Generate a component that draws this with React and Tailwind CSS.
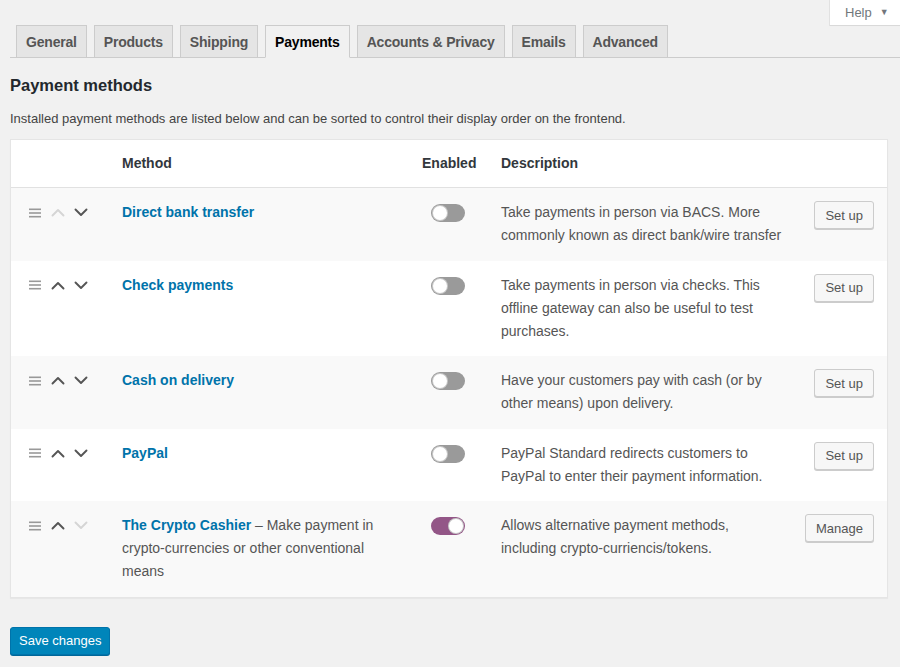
import React from "react";

const FONT = { fontFamily: '"Liberation Sans", Arial, Helvetica, sans-serif' };

function Drag() {
  return (
    <svg width="12" height="10" viewBox="0 0 12 10" className="block">
      <rect x="0" y="0.5" width="12" height="1.6" fill="#999" />
      <rect x="0" y="4.2" width="12" height="1.6" fill="#999" />
      <rect x="0" y="7.9" width="12" height="1.6" fill="#999" />
    </svg>
  );
}

function Chevron({ up, disabled }) {
  return (
    <svg width="14" height="9" viewBox="0 0 14 9" className="block">
      <path
        d={up ? "M1.5 7.5 L7 2 L12.5 7.5" : "M1.5 1.5 L7 7 L12.5 1.5"}
        fill="none"
        stroke={disabled ? "#d5d5d5" : "#555"}
        strokeWidth="1.9"
        strokeLinecap="round"
        strokeLinejoin="round"
      />
    </svg>
  );
}

function Toggle({ on }) {
  return (
    <div
      className={`w-[34px] h-[18px] rounded-full flex items-center px-[1px] ${
        on ? "bg-[#935687] justify-end" : "bg-[#9a9a9a] justify-start"
      }`}
    >
      <div className="w-[16px] h-[16px] rounded-full bg-white border border-[#777]/40" />
    </div>
  );
}

const rows = [
  {
    name: "Direct bank transfer",
    desc: "Take payments in person via BACS. More commonly known as direct bank/wire transfer",
    bg: "bg-[#f9f9f9]",
    upDisabled: true,
    btn: "Set up",
  },
  {
    name: "Check payments",
    desc: "Take payments in person via checks. This offline gateway can also be useful to test purchases.",
    bg: "bg-white",
    btn: "Set up",
  },
  {
    name: "Cash on delivery",
    desc: "Have your customers pay with cash (or by other means) upon delivery.",
    bg: "bg-[#f9f9f9]",
    btn: "Set up",
  },
  {
    name: "PayPal",
    desc: "PayPal Standard redirects customers to PayPal to enter their payment information.",
    bg: "bg-white",
    btn: "Set up",
  },
  {
    name: "The Crypto Cashier",
    extra: " – Make payment in crypto-currencies or other conventional means",
    desc: "Allows alternative payment methods, including crypto-curriencis/tokens.",
    bg: "bg-[#f9f9f9]",
    downDisabled: true,
    on: true,
    btn: "Manage",
  },
];

const tabs = ["General", "Products", "Shipping", "Payments", "Accounts & Privacy", "Emails", "Advanced"];

const grid = "grid grid-cols-[111px_290px_79px_310px_1fr]";

export default function App() {
  return (
    <div className="w-[900px] h-[667px] bg-[#f1f1f1] overflow-hidden text-[#444]" style={FONT}>
      {/* help row */}
      <div className="h-[25px] flex justify-end">
        <div className="w-[70px] h-[25px] bg-white shadow-[0_0_0_1px_rgba(0,0,0,0.06),0_1px_1px_rgba(0,0,0,0.04)] flex items-center pl-[15px] text-[13px] text-[#72777c]">
          <span>Help</span>
          <span className="ml-[8px] text-[9px] text-[#72777c]">▼</span>
        </div>
      </div>

      {/* tabs */}
      <div className="ml-[10px] border-b border-[#ccc] flex pl-[6px] gap-[7px] h-[33px] items-end">
        {tabs.map((t) => {
          const active = t === "Payments";
          return (
            <div
              key={t}
              className={`h-[33px] px-[9px] border border-[#ccc] flex items-center text-[14px] tracking-[-0.2px] font-bold leading-[20px] -mb-px ${
                active
                  ? "bg-[#f1f1f1] border-b-[#f1f1f1] text-black"
                  : "bg-[#e5e5e5] text-[#555]"
              }`}
            >
              {t}
            </div>
          );
        })}
      </div>

      <div className="px-[10px]">
        <h2 className="mt-[16px] text-[16.5px] leading-[22px] font-bold text-[#23282d]">Payment methods</h2>
        <p className="mt-[13px] text-[13px] leading-[19px] text-[#444]">
          Installed payment methods are listed below and can be sorted to control their display order on the frontend.
        </p>

        <div className="mt-[11px] w-[878px] bg-white border border-[#e5e5e5] shadow-[0_1px_1px_rgba(0,0,0,0.04)] text-[14px] leading-[23px]">
          <div className={`${grid} h-[48px] items-center border-b border-[#e1e1e1] font-bold text-[#32373c]`}>
            <div />
            <div>Method</div>
            <div className="pl-[10px]">Enabled</div>
            <div className="pl-[10px]">Description</div>
            <div />
          </div>
          {rows.map((r) => (
            <div key={r.name} className={`${grid} ${r.bg} pt-[13px] pb-[13.5px]`}>
              <div className="flex items-center h-[23px] pl-[18px]">
                <Drag />
                <div className="ml-[10px]">
                  <Chevron up disabled={r.upDisabled} />
                </div>
                <div className="ml-[9px]">
                  <Chevron disabled={r.downDisabled} />
                </div>
              </div>
              <div className="pr-[20px] text-[#555]">
                <span className="font-bold text-[#0073aa]">{r.name}</span>
                {r.extra}
              </div>
              <div className="pl-[19px] pt-[3px]">
                <Toggle on={r.on} />
              </div>
              <div className="pl-[10px] pr-[16px] text-[#555]">{r.desc}</div>
              <div className="flex justify-end pr-[13px]">
                <div className="h-[28px] px-[10px] bg-[#f7f7f7] border border-[#ccc] rounded-[3px] shadow-[0_1px_0_#ccc] text-[13px] text-[#555] flex items-center">
                  {r.btn}
                </div>
              </div>
            </div>
          ))}
        </div>

        <div className="mt-[29px] inline-flex h-[28px] px-[8px] items-center bg-[#0085ba] border border-[#0073aa] rounded-[3px] shadow-[0_1px_0_#006799] text-white text-[13px]">
          Save changes
        </div>
      </div>
    </div>
  );
}
